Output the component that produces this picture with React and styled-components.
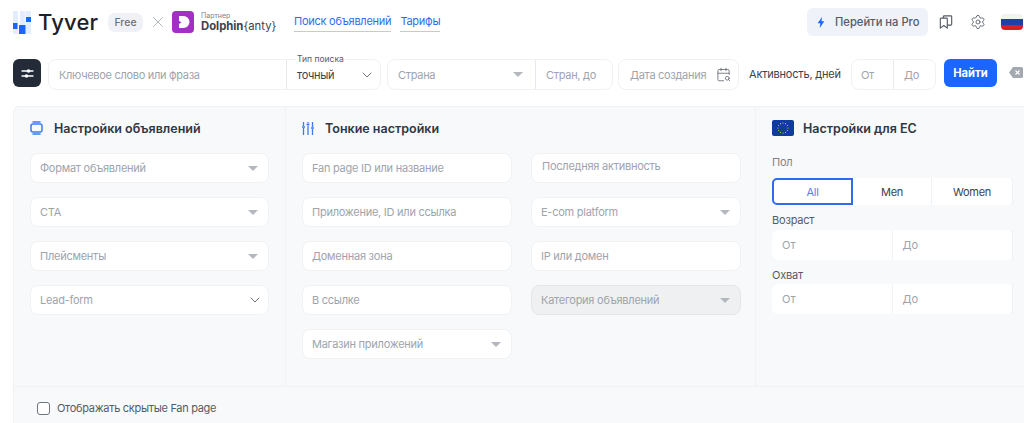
import styled, { createGlobalStyle } from 'styled-components';
import { ChevronDown, CalendarSearch, Settings, X } from 'lucide-react';

const GlobalStyle = createGlobalStyle`
  html, body {
    margin: 0;
    height: 423px;
    overflow: hidden;
    background: #fff;
    font-family: Inter, "Noto Sans", sans-serif;
    color: #2b3340;
  }
  * { box-sizing: border-box; }
`;

const Header = styled.header`
  display: flex;
  align-items: center;
  height: 28px;
  margin-top: 8px;
  padding: 0 1px 0 13px;
`;

const Brand = styled.div`
  display: flex;
  align-items: center;
`;

const BrandName = styled.span`
  width: 70px;
  margin-left: 7px;
  font-size: 22px;
  font-weight: 500;
  letter-spacing: 0.2px;
  color: #1c2129;
`;

const Badge = styled.span`
  display: flex;
  align-items: center;
  justify-content: center;
  width: 35px;
  height: 19px;
  border-radius: 7px;
  background: #eff1f7;
  font-size: 10.5px;
  font-weight: 500;
  color: #6b717c;
`;

const Times = styled(X)`
  margin: 0 5px 0 6px;
  color: #9aa0a9;
`;

const Partner = styled.div`
  display: flex;
  flex-direction: column;
  width: 75px;
  margin-left: 7px;
  line-height: 1;
  white-space: nowrap;
`;

const PartnerCaption = styled.span`
  font-size: 7px;
  color: #7c828c;
  margin-bottom: 2px;
`;

const PartnerName = styled.span`
  font-size: 11.3px;
  font-weight: 700;
  color: #3c424c;
  span {
    font-weight: 400;
  }
`;

const Nav = styled.nav`
  display: flex;
  gap: 9px;
  margin: 2px 0 0 18px;
`;

const NavLink = styled.a`
  padding-bottom: 3px;
  border-bottom: 1px solid #b5cbff;
  font-size: 11px;
  letter-spacing: -0.25px;
  line-height: 14px;
  color: #2f6bf0;
`;

const HeaderRight = styled.div`
  display: flex;
  align-items: center;
  margin-left: auto;
`;

const ProButton = styled.button`
  display: flex;
  align-items: center;
  gap: 10px;
  width: 121px;
  height: 28px;
  padding: 0 0 0 10px;
  border: 0;
  border-radius: 6px;
  background: #eff2f9;
  font: 500 11.2px Inter, sans-serif;
  color: #545b66;
`;

const HeaderIcon = styled.span`
  display: flex;
  margin-left: ${(p) => p.$gap}px;
  color: #555b65;
`;

const Flag = styled.div`
  width: 22px;
  height: 16px;
  margin-left: 15px;
  border-radius: 4px;
  background: linear-gradient(#f2f2f2 0 33%, #1f3fa8 33% 66%, #d8211f 66%);
`;

const SearchRow = styled.div`
  display: flex;
  align-items: flex-start;
  margin-top: 23px;
  padding-left: 13px;
`;

const FilterButton = styled.div`
  display: flex;
  align-items: center;
  justify-content: center;
  width: 28px;
  height: 28px;
  margin-right: 7px;
  border-radius: 6px;
  background: #232b38;
`;

const Group = styled.div`
  display: flex;
  width: ${(p) => p.$width}px;
  height: 31px;
  margin-right: ${(p) => p.$gap}px;
  border: 1px solid #eff1f4;
  border-radius: 8px;
  background: #fff;
`;

const Cell = styled.div`
  position: relative;
  display: flex;
  align-items: center;
  justify-content: space-between;
  width: ${(p) => p.$width}px;
  flex: ${(p) => (p.$width ? 'none' : 1)};
  padding: 0 ${(p) => p.$right ?? 10}px 0 ${(p) => p.$left ?? 10}px;
  border-left: ${(p) => (p.$divided ? '1px solid #e6e9ed' : '0')};
  font-size: 11px;
  letter-spacing: -0.3px;
  white-space: nowrap;
  color: #9ea4ad;
`;

const FloatLabel = styled.span`
  position: absolute;
  top: -6px;
  left: 9px;
  padding: 0 1px;
  background: #fff;
  font-size: 8.5px;
  letter-spacing: 0;
  line-height: 11px;
  color: #555b65;
`;

const Value = styled.span`
  color: #3c424c;
  font-size: 11px;
`;

const Caret = styled.i`
  width: 0;
  height: 0;
  border-left: 5.5px solid transparent;
  border-right: 5.5px solid transparent;
  border-top: 5.5px solid #b4b8be;
`;

const Chevron = styled(ChevronDown)`
  margin-right: -5px;
  color: #6f757f;
`;

const ActivityLabel = styled.span`
  width: 102px;
  padding-top: 8px;
  font-size: 11px;
  letter-spacing: -0.2px;
  line-height: 14px;
  color: #3c424c;
`;

const FindButton = styled.button`
  width: 53px;
  height: 28px;
  margin-left: 8px;
  border: 0;
  border-radius: 6px;
  background: #1a66ff;
  font: 700 11.2px Inter, sans-serif;
  color: #fff;
`;

const ClearIcon = styled.svg`
  margin: 8px 0 0 12px;
`;

const Panel = styled.section`
  display: flex;
  flex-direction: column;
  height: 330px;
  margin: 16px 0 0 13px;
  border-top: 1px solid #f0f2f4;
  border-left: 1px solid #f0f2f4;
  border-top-left-radius: 6px;
  background: #f8f9fa;
`;

const Columns = styled.div`
  display: flex;
  height: 280px;
  border-bottom: 1px solid #f0f2f6;
`;

const Column = styled.div`
  width: ${(p) => p.$width}px;
  padding: 11px 16px 0;
  border-right: ${(p) => (p.$last ? '0' : '1px solid #f0f2f4')};
`;

const Title = styled.h3`
  display: flex;
  align-items: center;
  gap: ${(p) => p.$gap}px;
  height: 20px;
  margin: 0 0 15px;
  font-size: 12.5px;
  font-weight: 600;
  color: #2f3743;
`;

const Stack = styled.div`
  display: flex;
  flex-direction: column;
  gap: 14px;
`;

const TwoColumns = styled.div`
  display: grid;
  grid-template-columns: 209.500px 209.500px;
  column-gap: 19.500px;
`;

const Field = styled.div`
  display: flex;
  align-items: center;
  justify-content: space-between;
  height: 30px;
  padding: ${(p) => (p.$raised ? '0 10px 4px 10px' : '0 10px 0 9px')};
  border: 1px solid ${(p) => (p.$disabled ? '#e4e6ea' : '#f0f2f4')};
  border-radius: 8px;
  background: ${(p) => (p.$disabled ? '#eff0f2' : '#fff')};
  font-size: 11px;
  letter-spacing: -0.25px;
  color: #9ea4ad;
`;

const FieldLabel = styled.div`
  padding: ${(p) => p.$top}px 0 ${(p) => p.$bottom}px;
  font-size: 11px;
  letter-spacing: -0.2px;
  line-height: 14px;
  color: ${(p) => p.$color};
`;

const Segments = styled.div`
  display: flex;
  width: 241px;
  height: 27px;
  border-radius: 6px;
  background: #fff;
`;

const Segment = styled.div`
  display: flex;
  align-items: center;
  justify-content: center;
  width: ${(p) => p.$width}px;
  border: ${(p) => (p.$active ? '2px solid #2f6bf0' : '0')};
  border-right: ${(p) => (p.$active ? '2px solid #2f6bf0' : '1px solid #f0f2f4')};
  border-radius: ${(p) => (p.$active ? '5px 0 0 5px' : '0')};
  font-size: 11px;
  letter-spacing: -0.3px;
  color: ${(p) => (p.$active ? '#5a7cf5' : '#3c424c')};
`;

const RangeBox = styled.div`
  display: flex;
  width: 241px;
  height: 30px;
  border-radius: 6px;
  background: #fff;
`;

const RangeCell = styled.div`
  display: flex;
  align-items: center;
  flex: 1;
  padding-left: 10px;
  border-right: 1px solid #f0f2f4;
  font-size: 11px;
  color: #9ea4ad;
`;

const Footer = styled.label`
  display: flex;
  align-items: center;
  gap: 7px;
  padding: 14px 0 0 23px;
  font-size: 11px;
  letter-spacing: -0.3px;
  line-height: 14px;
  color: #555b65;
`;

const Checkbox = styled.span`
  width: 13px;
  height: 13px;
  border: 1.5px solid #6f757f;
  border-radius: 3px;
  background: #fff;
`;

const Logo = () => (
  <svg width="18" height="23" viewBox="0 0 18 23">
    <rect x="0" y="0" width="5" height="23" fill="#e4edff" />
    <rect x="7" y="0" width="5.5" height="23" fill="#e4edff" />
    <rect x="13" y="0" width="5" height="23" fill="#e4edff" />
    <rect x="0" y="12" width="4.5" height="6" fill="#1a66ff" />
    <rect x="6" y="14" width="6.5" height="9" rx="0.5" fill="#1a66ff" />
    <rect x="13" y="6" width="5" height="5" fill="#1a66ff" />
  </svg>
);

const DolphinIcon = () => (
  <svg width="22" height="22" viewBox="0 0 22 22">
    <rect width="22" height="22" rx="4" fill="#a42fc4" />
    <path d="M7 5h4.500a6 6 0 0 1 0 12H7v-4l2.500-1.800L7 10z" fill="#fff" />
  </svg>
);

const Bolt = () => (
  <svg width="8" height="11" viewBox="0 0 12 14" preserveAspectRatio="none">
    <path d="M7.500 0 1 8h4l-1 6 7-8.500H6.800z" fill="#1a66ff" />
  </svg>
);

const BookmarksIcon = () => (
  <svg width="14" height="14" viewBox="0 0 16 16" fill="none" stroke="currentColor" strokeWidth="1.300" strokeLinejoin="round">
    <path d="M1.500 4.500a1 1 0 0 1 1-1h6a1 1 0 0 1 1 1v10.500l-4-3-4 3z" />
    <path d="M5 3.500V2a1 1 0 0 1 1-1h7.500a1 1 0 0 1 1 1v8.500a1 1 0 0 1-1 1H9.500" />
  </svg>
);

const FilterIcon = () => (
  <svg width="13" height="13" viewBox="0 0 13 13" fill="none" stroke="#fff" strokeWidth="1.300" strokeLinecap="round">
    <path d="M1 4h11M1 9h11" />
    <circle cx="7.500" cy="4" r="1.800" fill="#fff" stroke="none" />
    <circle cx="5.500" cy="9" r="1.800" fill="#fff" stroke="none" />
  </svg>
);

const ClearGlyph = () => (
  <ClearIcon width="14" height="11" viewBox="0 0 14 11">
    <path d="M4 0h8.500A1.500 1.500 0 0 1 14 1.500v8a1.500 1.500 0 0 1-1.500 1.500H4L0 5.500z" fill="#a3a9b1" />
    <path d="M6.500 3.500l4 4m0-4l-4 4" stroke="#fff" strokeWidth="1.200" />
  </ClearIcon>
);

const AdsIcon = () => (
  <svg width="13" height="14" viewBox="0 0 13 14" fill="none" stroke="#3d7bf5" strokeWidth="1.500" strokeLinecap="round">
    <rect x="1" y="3" width="11" height="8" rx="2" />
    <path d="M3 1h7M3 13h7" />
  </svg>
);

const TuneIcon = () => (
  <svg width="12" height="13" viewBox="0 0 12 13" fill="none" stroke="#3d7bf5" strokeWidth="1.300">
    <path d="M1.500 0v4M1.500 6v7M6 0v1.500M6 3.500V13M10.500 0v5M10.500 7v6" />
    <path d="M0 5h3M4.500 2.500h3M9 6h3" />
  </svg>
);

const EuFlag = () => {
  const stars = Array.from({ length: 12 }, (_, i) => i * (Math.PI / 6));
  return (
    <svg width="22" height="16" viewBox="0 0 22 16">
      <rect width="22" height="16" rx="2" fill="#0f3c9e" />
      {stars.map((a) => (
        <circle
          key={a}
          cx={11 + Math.cos(a) * 5}
          cy={8 + Math.sin(a) * 5}
          r="0.6"
          fill="#e8c83a"
        />
      ))}
    </svg>
  );
};

const SelectField = ({ children, disabled, chevron }) => (
  <Field $disabled={disabled}>
    {children}
    {chevron ? <Chevron size={16} strokeWidth={1.500} /> : <Caret />}
  </Field>
);

export default function App() {
  return (
    <>
      <GlobalStyle />
      <Header>
        <Brand>
          <Logo />
          <BrandName>Tyver</BrandName>
        </Brand>
        <Badge>Free</Badge>
        <Times size={18} strokeWidth={1} />
        <DolphinIcon />
        <Partner>
          <PartnerCaption>Партнер</PartnerCaption>
          <PartnerName>
            Dolphin<span>{'{anty}'}</span>
          </PartnerName>
        </Partner>
        <Nav>
          <NavLink>Поиск объявлений</NavLink>
          <NavLink>Тарифы</NavLink>
        </Nav>
        <HeaderRight>
          <ProButton>
            <Bolt />
            Перейти на Pro
          </ProButton>
          <HeaderIcon $gap={11}>
            <BookmarksIcon />
          </HeaderIcon>
          <HeaderIcon $gap={17}>
            <Settings size={16} strokeWidth={1.300} />
          </HeaderIcon>
          <Flag />
        </HeaderRight>
      </Header>

      <SearchRow>
        <FilterButton>
          <FilterIcon />
        </FilterButton>
        <Group $width={333} $gap={6}>
          <Cell $width={237}>Ключевое слово или фраза</Cell>
          <Cell $divided>
            <FloatLabel>Тип поиска</FloatLabel>
            <Value>точный</Value>
            <Chevron size={16} strokeWidth={1.500} />
          </Cell>
        </Group>
        <Group $width={226} $gap={5}>
          <Cell $width={147} $right={12}>
            Страна
            <Caret />
          </Cell>
          <Cell $divided>Стран, до</Cell>
        </Group>
        <Group $width={121} $gap={10}>
          <Cell $left={11} $right={7}>
            Дата создания
            <CalendarSearch size={15} strokeWidth={1.200} color="#555b65" />
          </Cell>
        </Group>
        <ActivityLabel>Активность, дней</ActivityLabel>
        <Group $width={85} $gap={0}>
          <Cell $width={41} $left={9}>
            От
          </Cell>
          <Cell $divided>До</Cell>
        </Group>
        <FindButton>Найти</FindButton>
        <ClearGlyph />
      </SearchRow>

      <Panel>
        <Columns>
          <Column $width={272}>
            <Title $gap={11}>
              <AdsIcon />
              Настройки объявлений
            </Title>
            <Stack>
              <SelectField>Формат объявлений</SelectField>
              <SelectField>CTA</SelectField>
              <SelectField>Плейсменты</SelectField>
              <SelectField chevron>Lead-form</SelectField>
            </Stack>
          </Column>
          <Column $width={470}>
            <Title $gap={11}>
              <TuneIcon />
              Тонкие настройки
            </Title>
            <TwoColumns>
              <Stack>
                <Field>Fan page ID или название</Field>
                <Field>Приложение, ID или ссылка</Field>
                <Field>Доменная зона</Field>
                <Field>В ссылке</Field>
                <SelectField>Магазин приложений</SelectField>
              </Stack>
              <Stack>
                <Field $raised>Последняя активность</Field>
                <SelectField>E-com platform</SelectField>
                <Field>IP или домен</Field>
                <SelectField disabled>Категория объявлений</SelectField>
              </Stack>
            </TwoColumns>
          </Column>
          <Column $width={268} $last>
            <Title $gap={9}>
              <EuFlag />
              Настройки для ЕС
            </Title>
            <FieldLabel $top={2} $bottom={9} $color="#7c828c">
              Пол
            </FieldLabel>
            <Segments>
              <Segment $width={81} $active>
                All
              </Segment>
              <Segment $width={79}>Men</Segment>
              <Segment $width={81}>Women</Segment>
            </Segments>
            <FieldLabel $top={8} $bottom={3} $color="#555b65">
              Возраст
            </FieldLabel>
            <RangeBox>
              <RangeCell>От</RangeCell>
              <RangeCell>До</RangeCell>
            </RangeBox>
            <FieldLabel $top={8} $bottom={2} $color="#555b65">
              Охват
            </FieldLabel>
            <RangeBox>
              <RangeCell>От</RangeCell>
              <RangeCell>До</RangeCell>
            </RangeBox>
          </Column>
        </Columns>
        <Footer>
          <Checkbox />
          Отображать скрытые Fan page
        </Footer>
      </Panel>
    </>
  );
}
